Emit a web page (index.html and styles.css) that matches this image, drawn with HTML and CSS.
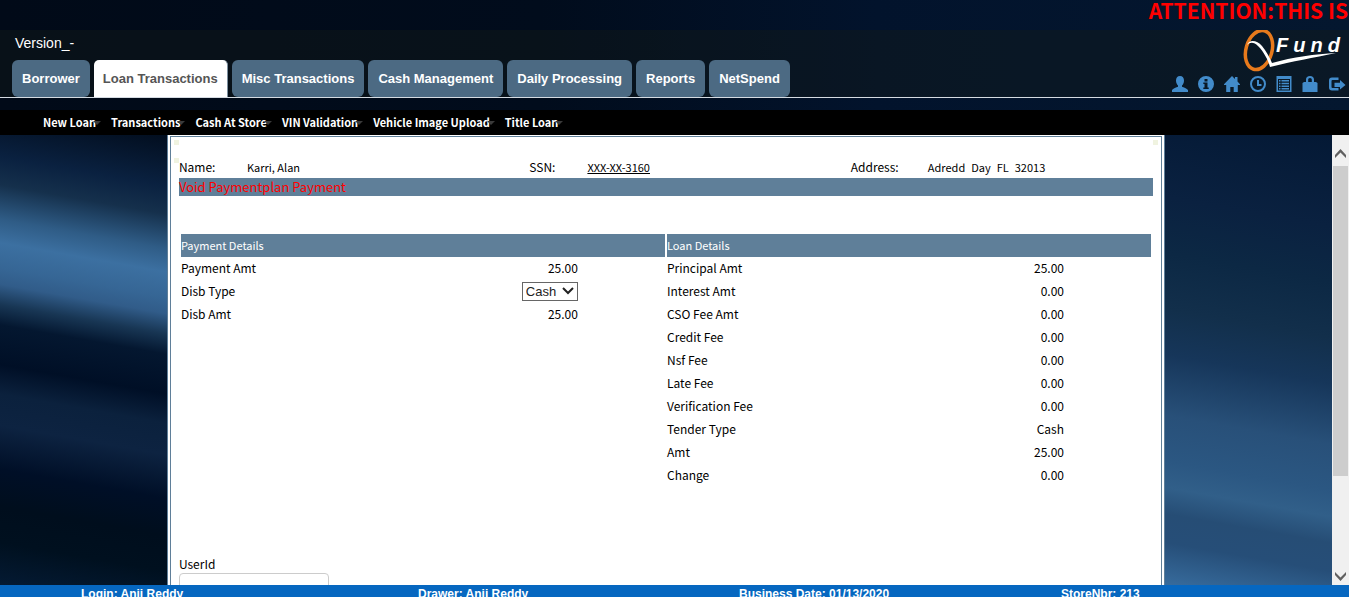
FILE: index.html
```html
<!DOCTYPE html>
<html lang="en">
<head>
<meta charset="utf-8">
<title>QFund</title>
<link rel="stylesheet" href="styles.css">
</head>
<body>
<div class="notice">ATTENTION:THIS IS</div>
<header class="header">
  <div class="header-left">
    <div class="version">Version_-</div>
    <nav class="tabs">
      <a class="tab" href="#">Borrower</a>
      <a class="tab tab-active" href="#">Loan Transactions</a>
      <a class="tab" href="#">Misc Transactions</a>
      <a class="tab" href="#">Cash Management</a>
      <a class="tab" href="#">Daily Processing</a>
      <a class="tab" href="#">Reports</a>
      <a class="tab" href="#">NetSpend</a>
    </nav>
  </div>
  <div class="header-right">
    <div class="logo">
      <svg class="logo-mark" viewBox="0 0 100 42" aria-hidden="true">
        <ellipse cx="16" cy="20" rx="13" ry="20" transform="rotate(16 16 20)" fill="none" stroke="#e87a1c" stroke-width="3.500"/>
        <path d="M4 15C6 9 14 10 19 16C23 21 27 28 29 33C50 27 72 24 93 23C70 28 50 31 27 37C25 30 21 22 15 16C11 12 7 12 4 15Z" fill="#fff"/>
      </svg>
      <span class="logo-text">Fund</span>
    </div>
    <nav class="icons">
      <a href="#" aria-label="User"><svg viewBox="0 0 16 16"><path d="M8 0c2.600 0 4 1.800 4 4.500C12 7 11 8.500 10 9.500v1.200c1.500.8 5 1.600 6 3.200V16H0v-2.100c1-1.600 4.500-2.400 6-3.200V9.500C5 8.500 4 7 4 4.500C4 1.800 5.400 0 8 0z"/></svg></a>
      <a href="#" aria-label="Information"><svg viewBox="0 0 16 16"><path fill-rule="evenodd" d="M8 0a8 8 0 1 1 0 16A8 8 0 0 1 8 0zM6.500 3v2.400h3V3zM5.300 6.500V8h1.200v3.500H5.300V13h5.400v-1.500H9.500v-5z"/></svg></a>
      <a href="#" aria-label="Home"><svg viewBox="0 0 16 16"><path d="M8 0l3 3V1h2.500v4.500L16 8.300V9h-2.200v7H9.700v-5H6.300v5H2.200V9H0v-.7z"/></svg></a>
      <a href="#" aria-label="Time"><svg viewBox="0 0 16 16"><path fill="none" stroke="#428bca" stroke-width="2" d="M8 1a7 7 0 1 1 0 14A7 7 0 0 1 8 1zM8 4v5h3.500"/></svg></a>
      <a href="#" aria-label="List"><svg viewBox="0 0 16 16"><path fill-rule="evenodd" d="M.5 0h15v16H.5zM2 3v11.500h12V3z"/><path d="M3 4h1.500v1.500H3zm2.500 0H13v1.500H5.500zM3 6.700h1.500v1.500H3zm2.500 0H13v1.500H5.500zM3 9.400h1.500v1.500H3zm2.500 0H13v1.500H5.500zM3 12h1.500v1.500H3zm2.500 0H13v1.500H5.500z"/></svg></a>
      <a href="#" aria-label="Lock"><svg viewBox="0 0 16 16"><path fill-rule="evenodd" d="M4 6V3.500C4 1.500 5.500 0 8 0s4 1.500 4 3.500V6h2l1.500 1v9H.5V7L2 6zM6.200 6h3.600V3.800c0-1-.6-1.800-1.800-1.800s-1.800.8-1.800 1.800z"/></svg></a>
      <a href="#" aria-label="Log out"><svg viewBox="0 0 18 16"><path d="M10.500 1.500H4Q1 1.500 1 4.500V11.500Q1 14.500 4 14.500H10.500V12H4.500Q3.500 12 3.500 11V5Q3.500 4 4.500 4H10.500zM12 4l5.500 5L12 13.500V11H6.500V6.800H12z"/></svg></a>
    </nav>
  </div>
</header>
<nav class="menu">
  <a href="#">New Loan</a>
  <a href="#">Transactions</a>
  <a href="#">Cash At Store</a>
  <a href="#">VIN Validation</a>
  <a href="#">Vehicle Image Upload</a>
  <a href="#">Title Loan</a>
</nav>
<div class="content">
  <div class="side side-left"></div>
  <main class="panel">
    <div class="sheet">
      <i class="corner corner-a"></i><i class="corner corner-b"></i><i class="corner corner-c"></i>
      <div class="customer">
        <span>Name:</span><span class="detail">Karri, Alan</span>
        <span>SSN:</span><a class="detail ssn" href="#">XXX-XX-3160</a>
        <span>Address:</span><span class="detail address"><span>Adredd</span><span>Day</span><span>FL</span><span>32013</span></span>
      </div>
      <h1 class="title">Void Paymentplan Payment</h1>
      <div class="tables">
        <table>
          <thead><tr><th colspan="2">Payment Details</th></tr></thead>
          <tbody>
            <tr><td>Payment Amt</td><td class="value">25.00</td></tr>
            <tr><td><label for="disb">Disb Type</label></td><td class="value"><select id="disb"><option>Cash</option></select></td></tr>
            <tr><td>Disb Amt</td><td class="value">25.00</td></tr>
          </tbody>
        </table>
        <table>
          <thead><tr><th colspan="2">Loan Details</th></tr></thead>
          <tbody>
            <tr><td>Principal Amt</td><td class="value">25.00</td></tr>
            <tr><td>Interest Amt</td><td class="value">0.00</td></tr>
            <tr><td>CSO Fee Amt</td><td class="value">0.00</td></tr>
            <tr><td>Credit Fee</td><td class="value">0.00</td></tr>
            <tr><td>Nsf Fee</td><td class="value">0.00</td></tr>
            <tr><td>Late Fee</td><td class="value">0.00</td></tr>
            <tr><td>Verification Fee</td><td class="value">0.00</td></tr>
            <tr><td>Tender Type</td><td class="value">Cash</td></tr>
            <tr><td>Amt</td><td class="value">25.00</td></tr>
            <tr><td>Change</td><td class="value">0.00</td></tr>
          </tbody>
        </table>
      </div>
      <div class="user">
        <label for="userid">UserId</label>
        <input id="userid" type="text">
      </div>
    </div>
  </main>
  <div class="side side-right"></div>
  <div class="scrollbar">
    <button type="button" aria-label="Scroll up"><svg viewBox="0 0 11 9"><path d="M0 6L5.500 0L11 6V9L5.500 3.500L0 9z"/></svg></button>
    <div class="track"><div class="thumb"></div></div>
    <button type="button" aria-label="Scroll down"><svg viewBox="0 0 11 9"><path d="M0 3L5.500 9L11 3V0L5.500 5.500L0 0z"/></svg></button>
  </div>
</div>
<footer class="footer">
  <span>Login: Anji Reddy</span>
  <span>Drawer: Anji Reddy</span>
  <span>Business Date: 01/13/2020</span>
  <span>StoreNbr: 213</span>
</footer>
</body>
</html>
```
FILE: styles.css
```css
* { box-sizing: border-box; }
body {
  margin: 0;
  height: 100vh;
  overflow: hidden;
  display: flex;
  flex-direction: column;
  font: 12px/16px "Noto Sans CJK SC", sans-serif;
  color: #000;
  background: linear-gradient(90deg, #010a18, #010c1c 40%, #02132c 65%, #04172f);
}
a { color: inherit; text-decoration: none; }
.notice {
  height: 30px;
  line-height: 20px;
  flex: none;
  padding-right: 1px;
  text-align: right;
  font-size: 21px;
  font-weight: bold;
  color: #f00;
  white-space: nowrap;
}
.header {
  height: 68px;
  flex: none;
  display: flex;
  justify-content: space-between;
  background: rgba(20, 28, 24, 0.4);
  border-bottom: 1px solid #d5dbe2;
  font-family: "Liberation Sans", sans-serif;
}
.header-left {
  display: flex;
  flex-direction: column;
  justify-content: space-between;
  padding: 5px 0 0 12px;
}
.version { font-size: 14px; color: #fff; padding-left: 3px; }
.tabs { display: flex; gap: 4px; }
.tab {
  height: 37px;
  line-height: 37px;
  padding: 0 10px;
  border-radius: 6px;
  background: #4c6a83;
  color: #fff;
  font-size: 13px;
  font-weight: bold;
  white-space: nowrap;
}
.tab-active {
  background: #fff;
  color: #555;
  padding: 0 9px;
  border-radius: 5px 5px 0 0;
  border-right: 1px solid #7d90a0;
}
.header-right {
  display: flex;
  flex-direction: column;
  align-items: flex-end;
}
.logo { position: relative; width: 106px; height: 42px; }
.logo-mark { width: 100px; height: 42px; display: block; }
.logo-text {
  position: absolute;
  left: 33px;
  top: 3px;
  font: italic bold 20px/24px "Liberation Sans", sans-serif;
  letter-spacing: 5px;
  color: #fff;
}
.icons { display: flex; gap: 10px; padding: 4px 3px 0 0; }
.icons svg { display: block; height: 16px; fill: #428bca; }
.menu {
  height: 37px;
  flex: none;
  display: flex;
  gap: 15px;
  padding-left: 43px;
  font-size: 11px;
  line-height: 24px;
  color: #fff;
  font-weight: bold;
  white-space: nowrap;
  border-top: 12px solid transparent;
  background: #000 padding-box;
}
.menu a { position: relative; }
.menu a::after {
  content: "";
  position: absolute;
  left: 100%;
  top: 11px;
  margin-left: -3px;
  border: 4px solid transparent;
  border-top-color: #3a3a3a;
  border-bottom: 0;
}
.content { flex: 1; min-height: 0; display: flex; overflow: hidden; }
.side { flex: 1; }
.side-left {
  background: linear-gradient(190deg, #020e1f 0, #0a2140 50px, #15304c 78px, #2f5c86 112px, #3c70a1 135px, #366695 160px, #315c89 176px, #183654 196px, #041730 216px, #000f26 255px, #0b213d 284px, #0d2341 315px, #000f27 358px, #000e1d 395px, #00101f 430px, #041a33 472px);
}
.side-right {
  background: linear-gradient(190deg, #041935 0, #0a2140 90px, #0c2844 145px, #122f4b 200px, #16365a 245px, #285079 305px, #2b5782 350px, #315f89 376px, #264d75 402px, #264e78 430px, #376b9c 472px);
}
.panel {
  width: 74%;
  padding: 1px 2px 0;
  background: #fff;
  border: solid #5f7f99;
  border-width: 0 1px;
}
.sheet {
  position: relative;
  min-height: 600px;
  padding: 21px 8px 0;
  border: 1px solid #5f7f99;
}
.corner { position: absolute; width: 5px; height: 5px; background: #f0f3e0; }
.corner-a { left: 3px; top: 3px; }
.corner-b { left: 3px; top: 21px; }
.corner-c { right: 3px; top: 3px; }
.customer {
  display: grid;
  grid-template-columns: 68fr 282fr 58fr 263fr 77fr 225fr;
  line-height: 18px;
  padding-bottom: 2px;
}
.detail { font-size: 11px; }
.ssn { text-decoration: underline; }
.address { display: flex; gap: 6px; }
.title {
  margin: 0 0 38px;
  background: #5f7f99;
  color: #f00;
  font-size: 13px;
  font-weight: normal;
  line-height: 18px;
}
.tables {
  display: grid;
  grid-template-columns: 1fr 1fr;
  gap: 2px;
  padding: 0 2px;
  min-height: 321px;
  align-items: start;
}
table { width: 100%; border-collapse: collapse; }
td, th { height: 23px; padding: 0 0 1px; font-weight: normal; text-align: left; }
th { background: #5f7f99; color: #fff; font-size: 11px; }
.value { text-align: right; padding-right: 18%; }
select {
  display: block;
  width: 56px;
  height: 19px;
  margin-left: auto;
  padding: 0 0 0 3px;
  border: 1px solid #666;
  border-radius: 0;
  color: #222;
  font: 13px "Liberation Sans", sans-serif;
  appearance: none;
  background: #fff url("data:image/svg+xml,%3Csvg xmlns='http://www.w3.org/2000/svg' viewBox='0 0 12 8'%3E%3Cpath d='M1 1l5 5l5-5' fill='none' stroke='%23222' stroke-width='2'/%3E%3C/svg%3E") no-repeat right 3px center / 12px 8px;
}
.user { display: flex; flex-direction: column; line-height: 18px; }
.user input {
  width: 150px;
  height: 30px;
  border: 1px solid #ccc;
  border-radius: 4px;
  background: #fff;
}
.scrollbar { width: 17px; display: flex; flex-direction: column; background: #f0f0f0; }
.scrollbar button {
  display: grid;
  place-items: center;
  height: 17px;
  padding: 0;
  border: 0;
  background: none;
}
.scrollbar button:first-child { height: 31px; padding-top: 6px; }
.scrollbar svg { width: 11px; height: 9px; fill: #606060; }
.track { flex: 1; padding: 0 1px; }
.thumb { height: 77%; background: #cdcdcd; }
.footer {
  height: 12px;
  flex: none;
  overflow: hidden;
  display: grid;
  grid-template-columns: 337fr 321fr 322fr 288fr;
  padding-left: 81px;
  background: #0667c0;
  color: #fff;
  font: bold 12px/18px "Liberation Sans", sans-serif;
}
```
